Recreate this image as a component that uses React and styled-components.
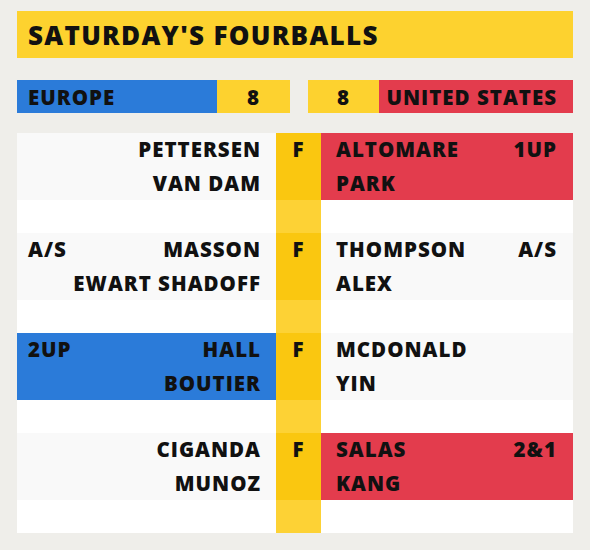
import React from "react";
import styled, { createGlobalStyle } from "styled-components";

const Global = createGlobalStyle`
  html, body {
    margin: 0;
    padding: 0;
    background: #efeeea;
  }
  body {
    font-family: "Open Sans", "Noto Sans", sans-serif;
    color: #111;
  }
`;

const colors = {
  blue: "#2b7bd9",
  red: "#e33c4d",
  yellow: "#fdd22f",
  status: "#fac710",
  statusGap: "#fdd235",
  row: "#f9f9f9",
  gap: "#ffffff",
};

const Page = styled.div`
  width: 556px;
  padding: 11px 17px 17px;
`;

const Title = styled.div`
  height: 47px;
  background: ${colors.yellow};
  display: flex;
  align-items: center;
  padding-left: 11px;
  font-size: 26px;
  font-weight: 800;
  letter-spacing: 1.3px;
`;

const ScoreBar = styled.div`
  display: grid;
  grid-template-columns: 200px 73px 18px 71px 194px;
  height: 33px;
  margin-top: 22px;
  font-size: 20.5px;
  font-weight: 800;
  letter-spacing: 1px;
`;

const Team = styled.div`
  background: ${(p) => p.$bg};
  display: flex;
  align-items: center;
  justify-content: ${(p) => (p.$right ? "flex-end" : "flex-start")};
  padding: ${(p) => (p.$right ? "0 16px 0 0" : "0 0 0 11px")};
`;

const Points = styled.div`
  background: ${colors.yellow};
  display: flex;
  align-items: center;
  justify-content: center;
`;

const Table = styled.div`
  display: grid;
  grid-template-columns: 259px 45px 252px;
  margin-top: 20px;
  font-size: 20.5px;
  font-weight: 800;
  letter-spacing: 1px;
`;

const TeamCell = styled.div`
  background: ${(p) => p.$bg || colors.row};
  display: flex;
  justify-content: space-between;
  flex-direction: ${(p) => (p.$right ? "row-reverse" : "row")};
  padding: ${(p) => (p.$right ? "0 16px 0 15px" : "0 15px 0 11px")};
  line-height: 33.5px;
`;

const Names = styled.div`
  display: flex;
  flex-direction: column;
  align-items: ${(p) => (p.$right ? "flex-start" : "flex-end")};
  white-space: nowrap;
`;

const Result = styled.div`
  white-space: nowrap;
`;

const Status = styled.div`
  background: ${colors.status};
  text-align: center;
  line-height: 33.5px;
  height: 67px;
`;

const Blank = styled.div`
  height: 33px;
  background: ${(p) => (p.$status ? colors.statusGap : colors.gap)};
`;

const matches = [
  {
    eu: ["PETTERSEN", "VAN DAM"],
    us: ["ALTOMARE", "PARK"],
    euScore: "",
    usScore: "1UP",
    winner: "us",
  },
  {
    eu: ["MASSON", "EWART SHADOFF"],
    us: ["THOMPSON", "ALEX"],
    euScore: "A/S",
    usScore: "A/S",
    winner: null,
  },
  {
    eu: ["HALL", "BOUTIER"],
    us: ["MCDONALD", "YIN"],
    euScore: "2UP",
    usScore: "",
    winner: "eu",
  },
  {
    eu: ["CIGANDA", "MUNOZ"],
    us: ["SALAS", "KANG"],
    euScore: "",
    usScore: "2&1",
    winner: "us",
  },
];

const App = () => {
  return (
    <>
      <Global />
      <Page>
        <Title>SATURDAY'S FOURBALLS</Title>
        <ScoreBar>
          <Team $bg={colors.blue}>EUROPE</Team>
          <Points>8</Points>
          <div />
          <Points>8</Points>
          <Team $bg={colors.red} $right>
            UNITED STATES
          </Team>
        </ScoreBar>
        <Table>
          {matches.map((m, i) => (
            <React.Fragment key={i}>
              <TeamCell $bg={m.winner === "eu" ? colors.blue : null}>
                <Result>{m.euScore}</Result>
                <Names>
                  {m.eu.map((n) => (
                    <span key={n}>{n}</span>
                  ))}
                </Names>
              </TeamCell>
              <Status>F</Status>
              <TeamCell $right $bg={m.winner === "us" ? colors.red : null}>
                <Result>{m.usScore}</Result>
                <Names $right>
                  {m.us.map((n) => (
                    <span key={n}>{n}</span>
                  ))}
                </Names>
              </TeamCell>
              <Blank />
              <Blank $status />
              <Blank />
            </React.Fragment>
          ))}
        </Table>
      </Page>
    </>
  );
};

export default App;
